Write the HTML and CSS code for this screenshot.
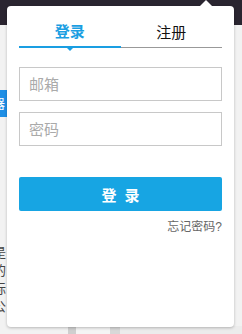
FILE: index.html
```html
<!DOCTYPE html>
<html lang="zh-CN">
<head>
  <meta charset="UTF-8">
  <title>登录</title>
  <link rel="stylesheet" href="styles.css">
</head>
<body>
  <div class="topbar"></div>
  <div class="page">
    <div class="side-left">
      <div class="side-btn">器</div>
      <div class="side-text">是<br>的<br>标<br>公</div>
    </div>
    <div class="bottom-strip">
      <span class="seg seg-a"></span>
      <span class="seg seg-b"></span>
      <span class="seg seg-c"></span>
      <span class="seg seg-d"></span>
    </div>
  </div>

  <div class="popup">
    <div class="tabs">
      <div class="tab tab-active">登录</div>
      <div class="tab">注册</div>
    </div>
    <form class="login-form">
      <input class="field" type="text" placeholder="邮箱">
      <input class="field" type="password" placeholder="密码">
      <button type="button" class="login-btn">登 录</button>
      <a class="forgot" href="#">忘记密码?</a>
    </form>
  </div>
</body>
</html>
```

FILE: styles.css
```css
html, body {
  margin: 0;
  padding: 0;
  width: 242px;
  height: 334px;
  overflow: hidden;
}

body {
  font-family: "Liberation Sans", "Noto Sans CJK SC", sans-serif;
  background-color: #f4f4f4;
  position: relative;
}

.topbar {
  height: 25px;
  background-color: #2a2530;
}

.page {
  height: 309px;
  background-color: #f2f2f2;
  display: flex;
  flex-direction: column;
}

.side-left {
  width: 7px;
  overflow: hidden;
  display: flex;
  flex-direction: column;
}

.side-btn {
  margin-top: 65px;
  height: 27px;
  width: 20px;
  margin-left: -8px;
  background-color: #1e8fe6;
  color: #fff;
  font-size: 13px;
  line-height: 27px;
}

.side-text {
  margin-top: 127px;
  margin-left: -7px;
  font-size: 13px;
  line-height: 18px;
  color: #444;
}

.bottom-strip {
  margin-top: auto;
  height: 8px;
  display: flex;
}

.seg {
  display: block;
  height: 8px;
}

.seg-a { margin-left: 68px; width: 8px; background-color: #cfcfcf; }
.seg-b { width: 34px; background-color: #f4f4f4; }
.seg-c { width: 10px; background-color: #d8d8d8; }
.seg-d { width: 122px; background-color: #ececec; }

/* 弹出登录框 */
.popup {
  position: absolute;
  left: 7px;
  top: 6px;
  width: 227px;
  height: 321px;
  box-sizing: border-box;
  padding: 12px 12px 0;
  background-color: #fff;
  border-radius: 4px;
  box-shadow: 0 1px 3px rgba(0, 0, 0, 0.25);
}

.popup::before {
  content: "";
  position: absolute;
  top: -6px;
  left: 193px;
  border-left: 6px solid transparent;
  border-right: 6px solid transparent;
  border-bottom: 6px solid #fff;
}

.tabs {
  display: flex;
  border-bottom: 1px solid #999;
}

.tab {
  flex: 1;
  text-align: center;
  font-size: 15px;
  line-height: 29px;
  color: #111;
  position: relative;
}

.tab-active {
  color: #1a9ee2;
  font-weight: bold;
  margin-bottom: -1px;
  border-bottom: 2px solid #1a9ee2;
  line-height: 28px;
}

.tab-active::after {
  content: "";
  position: absolute;
  left: 50%;
  bottom: -5px;
  margin-left: -3px;
  border-left: 3px solid transparent;
  border-right: 3px solid transparent;
  border-top: 3px solid #1a9ee2;
}

.login-form {
  display: flex;
  flex-direction: column;
  padding-top: 19px;
}

.field {
  height: 34px;
  box-sizing: border-box;
  border: 1px solid #c8c8c8;
  padding: 0 9px;
  font-family: inherit;
  font-size: 15px;
  color: #333;
  outline: none;
  margin-bottom: 11px;
}

.field::placeholder {
  color: #aaa;
}

.login-btn {
  margin-top: 20px;
  height: 34px;
  border: none;
  border-radius: 2px;
  background-color: #17a5e3;
  color: #fff;
  font-family: inherit;
  font-size: 15px;
  font-weight: bold;
  word-spacing: 4px;
}

.forgot {
  align-self: flex-end;
  margin-top: 6px;
  font-size: 12px;
  color: #666;
  text-decoration: none;
}
```
